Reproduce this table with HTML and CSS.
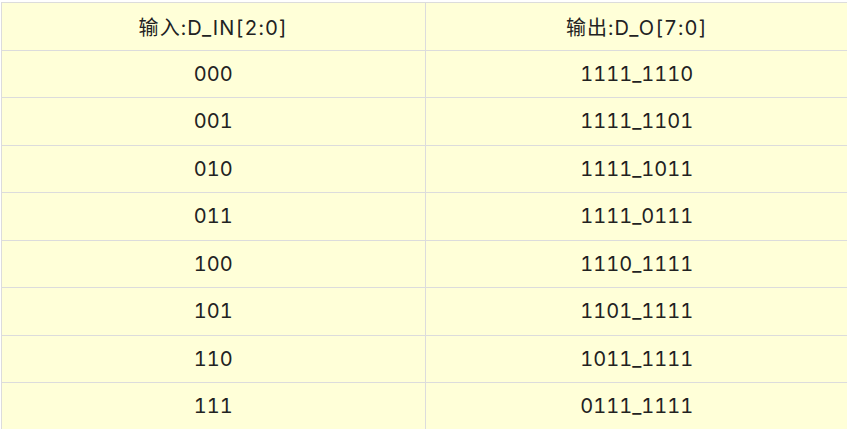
FILE: index.html
```html
<!DOCTYPE html>
<html lang="zh-CN">
<head>
<meta charset="utf-8">
<title>译码器真值表</title>
<link rel="stylesheet" href="styles.css">
</head>
<body>
<div class="wrap">
<table class="truth">
<thead>
<tr><th>输入:D_IN[2:0]</th><th>输出:D_O[7:0]</th></tr>
</thead>
<tbody>
<tr><td>000</td><td>1111_1110</td></tr>
<tr><td>001</td><td>1111_1101</td></tr>
<tr><td>010</td><td>1111_1011</td></tr>
<tr><td>011</td><td>1111_0111</td></tr>
<tr><td>100</td><td>1110_1111</td></tr>
<tr><td>101</td><td>1101_1111</td></tr>
<tr><td>110</td><td>1011_1111</td></tr>
<tr><td>111</td><td>0111_1111</td></tr>
</tbody>
</table>
</div>
</body>
</html>
```
FILE: styles.css
```css
html, body {
  margin: 0;
  padding: 0;
  background: #ffffff;
}
.wrap {
  padding: 2px 0 0 1px;
  overflow: hidden;
}
.truth {
  border-collapse: collapse;
  width: 848px;
  table-layout: fixed;
  background: #ffffd8;
  font-family: Inter, "Noto Sans CJK SC", sans-serif;
  font-size: 20px;
  font-variant-numeric: tabular-nums;
  color: #222;
}
.truth th,
.truth td {
  border: 1px solid #dcdcdc;
  height: 46.5px;
  padding: 0;
  text-align: center;
  vertical-align: middle;
  font-weight: normal;
}
.truth th {
  letter-spacing: 1.1px;
}
```
